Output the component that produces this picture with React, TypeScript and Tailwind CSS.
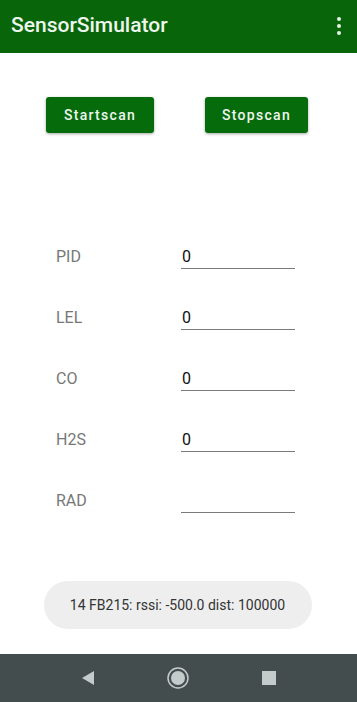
import React from 'react';

const fields = [
  { label: 'PID', value: '0' },
  { label: 'LEL', value: '0' },
  { label: 'CO', value: '0' },
  { label: 'H2S', value: '0' },
  { label: 'RAD', value: '' },
];

export default function App() {
  return (
    <div className="flex h-[702px] w-[357px] flex-col bg-white font-['Roboto',sans-serif]">
      <div className="flex h-[53px] shrink-0 items-center justify-between bg-[#086509] pb-[2px] pl-[11px] pr-[16px]">
        <span className="text-[21px] font-medium text-[#eef6ee]">SensorSimulator</span>
        <div className="flex flex-col gap-[3px]">
          <span className="h-[4px] w-[4px] rounded-full bg-[#e6f3e6]" />
          <span className="h-[4px] w-[4px] rounded-full bg-[#e6f3e6]" />
          <span className="h-[4px] w-[4px] rounded-full bg-[#e6f3e6]" />
        </div>
      </div>

      <div className="flex flex-1 flex-col">
        <div className="mt-[44px] flex gap-[51px] pl-[46px]">
          <button className="h-[36px] w-[108px] rounded-[3px] bg-[#056b0b] text-[14px] font-medium tracking-[1.3px] text-[#eef6ee] shadow-[0_1px_3px_rgba(0,0,0,0.35)]">
            Startscan
          </button>
          <button className="h-[36px] w-[103px] rounded-[3px] bg-[#056b0b] text-[14px] font-medium tracking-[1.3px] text-[#eef6ee] shadow-[0_1px_3px_rgba(0,0,0,0.35)]">
            Stopscan
          </button>
        </div>

        <div className="mt-[93px] flex flex-col">
          {fields.map((f) => (
            <div key={f.label} className="flex h-[61px] items-center">
              <span className="w-[181px] shrink-0 pl-[56px] text-[16px] text-[#777777]">{f.label}</span>
              <div className="h-[24px] w-[114px] border-b border-[#7a7a7a] pl-[1px] text-[16px] leading-[23px] text-[#111]">
                {f.value}
              </div>
            </div>
          ))}
        </div>

        <div className="mx-auto mt-[50px] flex h-[48px] w-[268px] -translate-x-[1px] items-center justify-center rounded-full bg-[#eeeeee] text-[14px] text-[#333]">
          14 FB215: rssi: -500.0 dist: 100000
        </div>
      </div>

      <div className="flex h-[48px] shrink-0 items-center justify-around bg-[#444d4d] px-[45px]">
        <svg width="16" height="16" viewBox="0 0 16 16">
          <polygon points="14,1 14,15 2,8" fill="#c3cbcb" />
        </svg>
        <svg width="24" height="24" viewBox="0 0 24 24">
          <circle cx="12" cy="12" r="10" fill="none" stroke="#c3cbcb" strokeWidth="1.5" />
          <circle cx="12" cy="12" r="7" fill="#c3cbcb" />
        </svg>
        <svg width="16" height="16" viewBox="0 0 16 16">
          <rect x="1" y="1" width="14" height="14" fill="#c3cbcb" />
        </svg>
      </div>
    </div>
  );
}
